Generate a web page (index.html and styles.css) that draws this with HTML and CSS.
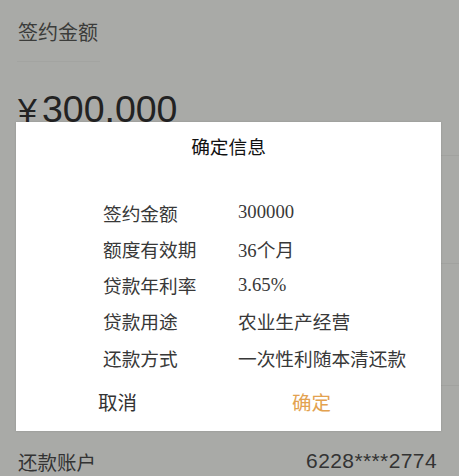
FILE: index.html
```html
<!DOCTYPE html>
<html lang="zh-CN">
<head>
  <meta charset="UTF-8" />
  <meta name="viewport" content="width=device-width, initial-scale=1.0"/>
  <title>签约确认</title>
  <link rel="stylesheet" href="styles.css">
</head>
<body>

  <div class="page">
    <div class="sign-row">
      <div class="sign-label">签约金额</div>
      <div class="short-rule"></div>
    </div>

    <div class="amount-row">
      <span class="yen">¥</span><span class="amount">300.000</span>
    </div>

    <!-- rows hidden under the dialog -->
    <div class="row row-a"></div>
    <div class="row row-b"></div>
    <div class="row row-c"></div>

    <div class="account-row">
      <span class="account-label">还款账户</span>
      <span class="account-no">6228****2774</span>
    </div>
  </div>

  <!-- Confirm dialog -->
  <div class="dialog">
    <div class="dialog-title">确定信息</div>

    <div class="info">
      <div class="info-label">签约金额</div>
      <div class="info-value">300000</div>
      <div class="info-label">额度有效期</div>
      <div class="info-value">36个月</div>
      <div class="info-label">贷款年利率</div>
      <div class="info-value">3.65%</div>
      <div class="info-label">贷款用途</div>
      <div class="info-value">农业生产经营</div>
      <div class="info-label">还款方式</div>
      <div class="info-value">一次性利随本清还款</div>
    </div>

    <div class="actions">
      <button class="btn cancel">取消</button>
      <button class="btn ok">确定</button>
    </div>
  </div>

</body>
</html>
```

FILE: styles.css
```css
body {
  margin: 0;
  background-color: #a9aaa7;
  font-family: 'Liberation Sans', 'Noto Sans CJK SC', sans-serif;
  color: #333;
  overflow: hidden;
}

.page {
  width: 459px;
  height: 476px;
}

.sign-row {
  padding: 19px 0 0 18px;
  box-sizing: border-box;
  height: 62px;
  display: flex;
  flex-direction: column;
  justify-content: space-between;
}

.sign-label {
  font-size: 20px;
  line-height: 28px;
  color: #3b3c3a;
}

.short-rule {
  width: 83px;
  height: 1px;
  margin-left: -1px;
  background-color: #a3a4a1;
}

.amount-row {
  height: 93px;
  box-sizing: border-box;
  padding: 25px 0 0 18px;
  line-height: 44px;
  color: #222;
}

.yen {
  font-size: 34px;
  margin-right: 5px;
}

.amount {
  font-size: 37.5px;
}

.row {
  margin-left: 20px;
  border-top: 1px solid #a1a29f;
  box-sizing: border-box;
}

.row-a { height: 108px; }
.row-b { height: 122px; }
.row-c { height: 46px; }

.account-row {
  height: 60px;
  display: flex;
  justify-content: space-between;
  align-items: center;
  padding: 0 22px 0 18px;
}

.account-label {
  font-size: 19.5px;
  color: #333;
}

.account-no {
  font-size: 21px;
  letter-spacing: 0.4px;
  color: #333;
}

/* dialog */
.dialog {
  position: absolute;
  left: 16px;
  top: 122px;
  width: 425px;
  height: 309px;
  background-color: #fff;
  box-shadow: 0 0 2px rgba(0, 0, 0, 0.15);
}

.dialog-title {
  padding-top: 13px;
  text-align: center;
  font-size: 18.7px;
  line-height: 26px;
  color: #111;
}

.info {
  display: grid;
  grid-template-columns: 135px auto;
  grid-auto-rows: 36.25px;
  align-items: center;
  margin-top: 33px;
  padding-left: 87px;
  font-size: 18.7px;
}

.info-label {
  color: #383838;
}

.info-value {
  font-family: 'Liberation Serif', 'Noto Sans CJK SC', serif;
  color: #383838;
}

.actions {
  display: flex;
  gap: 155px;
  margin-top: 15px;
  padding-left: 82px;
}

.btn {
  border: none;
  background: none;
  padding: 0;
  font-family: 'Liberation Sans', 'Noto Sans CJK SC', sans-serif;
  font-size: 19.5px;
  line-height: 26px;
  cursor: pointer;
}

.btn.cancel {
  color: #333;
}

.btn.ok {
  color: #e3a24f;
}
```
